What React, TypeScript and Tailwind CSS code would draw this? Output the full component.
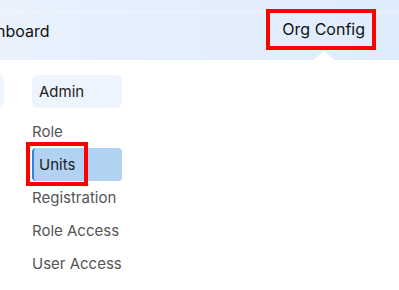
// Org config menu: header with nav, dropdown caret, admin sub-nav.

const ITEMS = ["Role", "Units", "Registration", "Role Access", "User Access"];

export default function App() {
  return (
    <div
      className="relative h-[290px] w-[399px] overflow-hidden bg-white"
      style={{ fontFamily: "Inter, 'Noto Sans', sans-serif" }}
    >
      <header className="relative flex h-[60px] items-center justify-between bg-gradient-to-r from-[#e9f2fd] to-[#dfecfc] pr-[18px]">
        <div className="absolute inset-x-0 top-[11px] h-px bg-white/40" />
        <span className="-ml-[33px] pt-px text-[16px] text-[#111]">Dashboard</span>
        <div className="relative flex h-[41px] items-center px-[16px] pb-[3px] text-[16px] text-[#111]">
          Org Config
          <span className="absolute bottom-[-10px] left-1/2 h-0 w-0 -translate-x-1/2 border-x-[12px] border-b-[10px] border-x-transparent border-b-white" />
        </div>
      </header>

      <div className="flex gap-[28px] pt-[15px]">
        <div className="-ml-[86px] h-[33px] w-[90px] rounded-md bg-[#edf4fe]" />
        <nav className="flex w-[90px] flex-col text-[15px]">
          <div className="flex h-[33px] items-center rounded-md bg-[#edf4fe] px-[7px] pt-px text-[#222]">
            Admin
          </div>
          <div className="h-[7px]" />
          {ITEMS.map((item) =>
            item === "Units" ? (
              <div
                key={item}
                className="flex h-[33px] items-center rounded-[4px] border-l-2 border-[#2f80ed] bg-[#b1d2f3] pl-[5px] pt-px text-[#1a1a1a]"
              >
                {item}
              </div>
            ) : (
              <div key={item} className="flex h-[33px] items-center pt-px text-[#555]">
                {item}
              </div>
            )
          )}
        </nav>
      </div>

      <div className="pointer-events-none absolute left-[266px] top-[9px] h-[41px] w-[110px] border-4 border-[#ff0000]" />
      <div className="pointer-events-none absolute left-[26px] top-[142px] h-[44px] w-[62px] border-4 border-[#ff0000]" />
    </div>
  );
}
